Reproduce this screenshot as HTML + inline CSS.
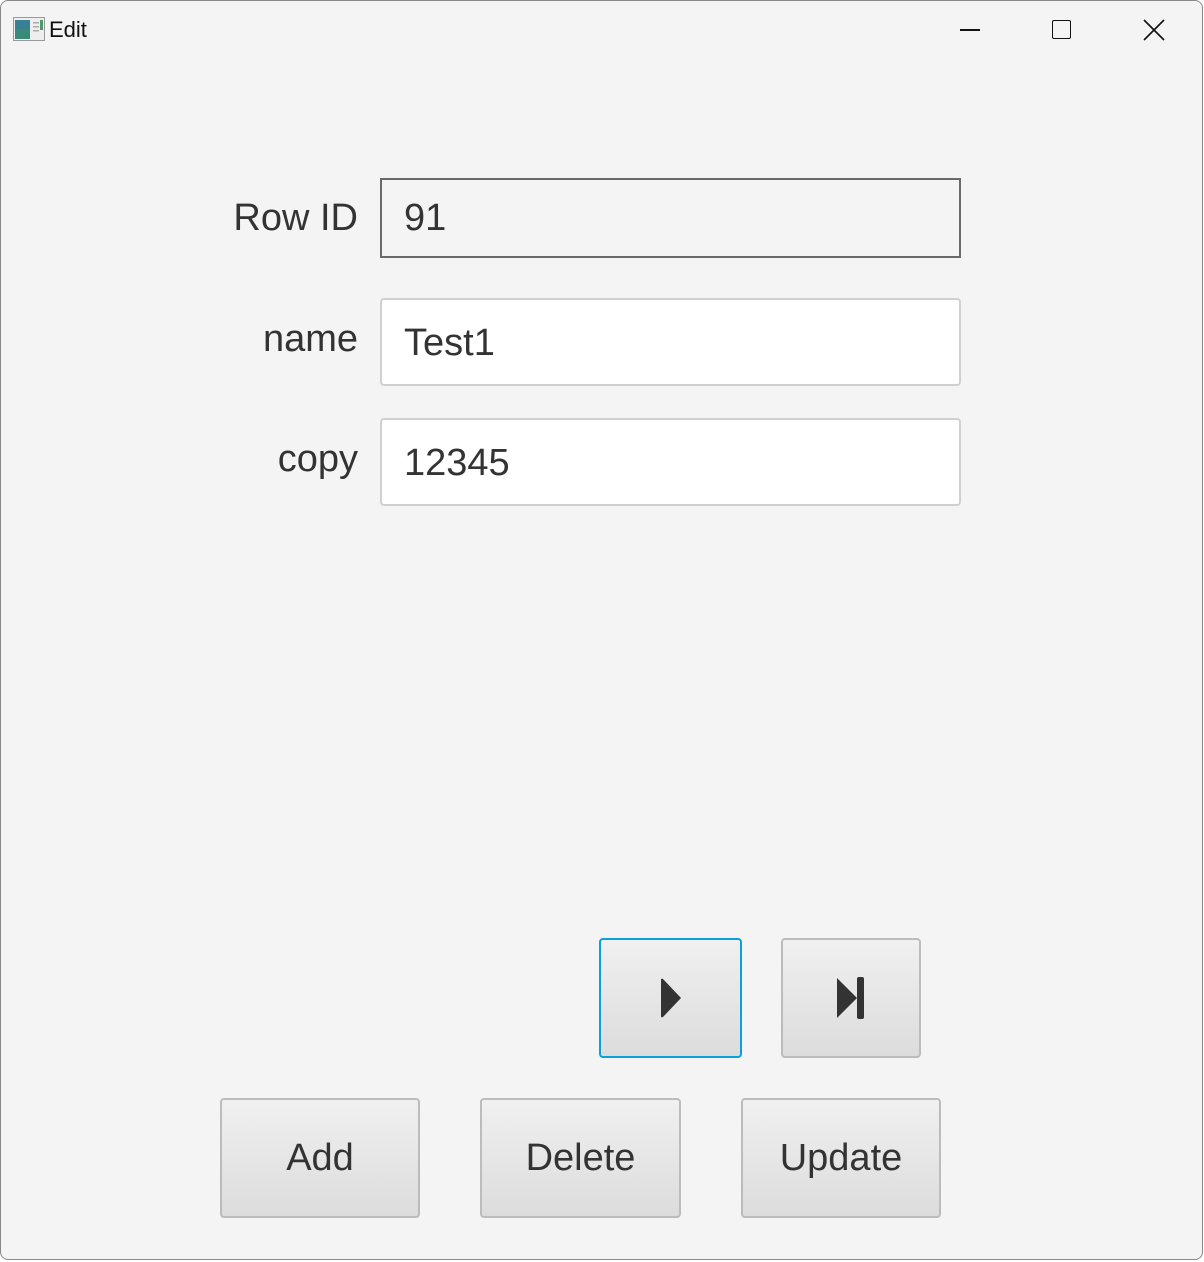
<!DOCTYPE html>
<html><head><meta charset="utf-8"><style>
*{box-sizing:border-box;margin:0;padding:0}
body{width:1204px;height:1262px;background:#fff;font-family:"Liberation Sans",sans-serif;overflow:hidden;position:relative}
.win{position:absolute;left:0;top:0;width:1203px;height:1260px;background:#f4f4f4;border:1px solid #888;border-radius:8px}
.in{position:absolute;left:-1px;top:-1px;width:1204px;height:1262px}
.lbl{position:absolute;font-size:38px;color:#333;text-align:right;width:200px;left:158px}
.fld{position:absolute;left:380px;width:581px;font-size:38px;color:#333;padding-left:22px}
.btn{position:absolute;border:2px solid #bcbcbc;border-radius:4px;background:linear-gradient(#f0f0f0,#dcdcdc);font-size:38px;color:#333;display:flex;align-items:center;justify-content:center}
</style></head><body>
<div class="win"><div class="in">
<svg style="position:absolute;left:13px;top:17px" width="32" height="25"><rect x="0.5" y="0.5" width="31" height="23" fill="#eee" stroke="#999"/><rect x="2" y="3" width="15" height="19" fill="#3a8a7a"/><rect x="2" y="3" width="15" height="9" fill="#3a7aa6" opacity=".6"/><rect x="20" y="5" width="6" height="1.5" fill="#aaa"/><rect x="20" y="9" width="6" height="1.5" fill="#aaa"/><rect x="20" y="13" width="6" height="1.5" fill="#aaa"/><rect x="27" y="3" width="3" height="10" fill="#4a9a6a"/></svg>
<div style="position:absolute;left:49px;top:17px;font-size:22px;color:#111">Edit</div>
<div style="position:absolute;left:960px;top:29px;width:20px;height:1.5px;background:#111"></div>
<div style="position:absolute;left:1052px;top:20px;width:19px;height:19px;border:1.5px solid #111;border-radius:2px"></div>
<svg style="position:absolute;left:1143px;top:19px" width="22" height="22"><path d="M1 1L21 21M21 1L1 21" stroke="#111" stroke-width="1.6"/></svg>

<div class="lbl" style="top:197px">Row ID</div>
<div class="fld" style="top:178px;height:80px;border:2px solid #6a6a6a;background:#f4f4f4;line-height:76px">91</div>
<div class="lbl" style="top:318px">name</div>
<div class="fld" style="top:298px;height:88px;border:2px solid #d0d0d0;border-radius:4px;background:#fff;line-height:86px">Test1</div>
<div class="lbl" style="top:438px">copy</div>
<div class="fld" style="top:418px;height:88px;border:2px solid #d0d0d0;border-radius:4px;background:#fff;line-height:86px">12345</div>

<div class="btn" style="left:599px;top:938px;width:143px;height:120px;border-color:#0aa0d8"><svg width="22" height="40"><path d="M1 2Q1 0 3 1L21 20L3 39Q1 40 1 38Z" fill="#333"/></svg></div>
<div class="btn" style="left:781px;top:938px;width:140px;height:120px"><svg width="28" height="42"><path d="M0 1L20 21L0 41Z" fill="#333"/><rect x="20" y="0" width="7" height="42" rx="2" fill="#333"/></svg></div>

<div class="btn" style="left:220px;top:1098px;width:200px;height:120px">Add</div>
<div class="btn" style="left:480px;top:1098px;width:201px;height:120px">Delete</div>
<div class="btn" style="left:741px;top:1098px;width:200px;height:120px">Update</div>
</div></div>
</body></html>
